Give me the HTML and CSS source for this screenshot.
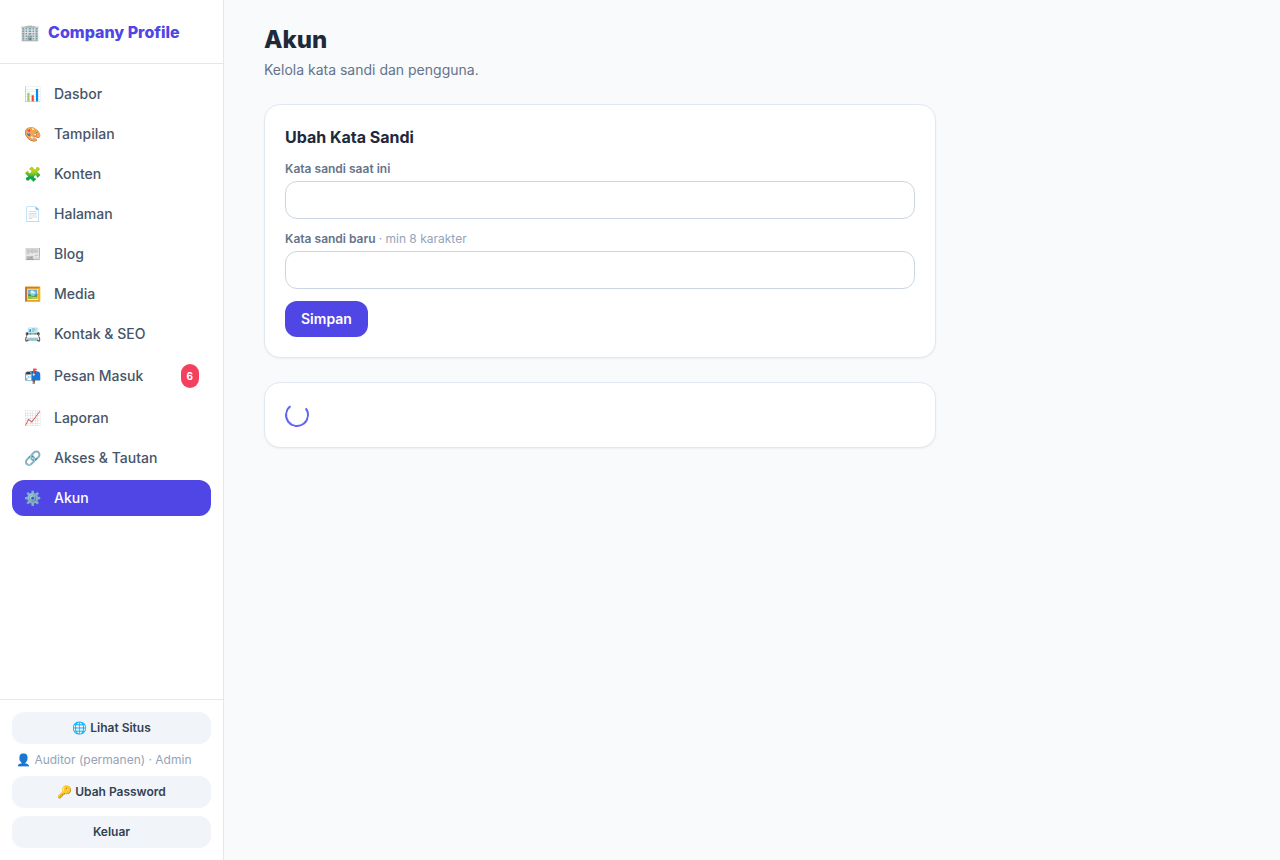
FILE: index.html
```html
<!DOCTYPE html>
<html lang="id">
<head>
    <meta charset="UTF-8">
    <meta name="viewport" content="width=device-width, initial-scale=1.0">
    <title>Akun</title>
    <link rel="stylesheet" href="styles.css">
</head>
<body>
    <div class="app">
        <aside class="sidebar">
            <div class="brand"><span>🏢</span><span>Company Profile</span></div>
            <nav class="menu">
                <a href="#dasbor" class="menu-item"><span class="icon">📊</span>Dasbor</a>
                <a href="#tampilan" class="menu-item"><span class="icon">🎨</span>Tampilan</a>
                <a href="#konten" class="menu-item"><span class="icon">🧩</span>Konten</a>
                <a href="#halaman" class="menu-item"><span class="icon">📄</span>Halaman</a>
                <a href="#blog" class="menu-item"><span class="icon">📰</span>Blog</a>
                <a href="#media" class="menu-item"><span class="icon">🖼️</span>Media</a>
                <a href="#kontak" class="menu-item"><span class="icon">📇</span>Kontak &amp; SEO</a>
                <a href="#pesan" class="menu-item"><span class="icon">📬</span>Pesan Masuk<span class="badge">6</span></a>
                <a href="#laporan" class="menu-item"><span class="icon">📈</span>Laporan</a>
                <a href="#akses" class="menu-item"><span class="icon">🔗</span>Akses &amp; Tautan</a>
                <a href="#akun" class="menu-item active"><span class="icon">⚙️</span>Akun</a>
            </nav>
            <div class="sidebar-footer">
                <a href="#situs" class="btn-soft">🌐 Lihat Situs</a>
                <div class="user">👤 Auditor (permanen) · Admin</div>
                <button type="button" class="btn-soft">🔑 Ubah Password</button>
                <button type="button" class="btn-soft">Keluar</button>
            </div>
        </aside>

        <main class="content">
            <h1>Akun</h1>
            <p class="subtitle">Kelola kata sandi dan pengguna.</p>

            <form class="card">
                <h2>Ubah Kata Sandi</h2>
                <div class="field">
                    <label for="current">Kata sandi saat ini</label>
                    <input type="password" id="current">
                </div>
                <div class="field">
                    <label for="new">Kata sandi baru <span class="hint">· min 8 karakter</span></label>
                    <input type="password" id="new">
                </div>
                <button type="button" class="btn-primary">Simpan</button>
            </form>

            <!-- daftar pengguna, masih dimuat -->
            <section class="card">
                <div class="spinner"></div>
            </section>
        </main>
    </div>
</body>
</html>
```
FILE: styles.css
```css
*{
    box-sizing: border-box;
}
body{
    margin: 0;
    background-color: #f8fafc;
    color: #1e293b;
    font-family: Inter, "Liberation Sans", sans-serif;
    font-size: 14px;
    line-height: 20px;
}
h1,h2,p{
    margin: 0;
}
a{
    color: inherit;
    text-decoration: none;
}
button,input{
    font: inherit;
    color: inherit;
}
button{
    border: none;
    cursor: pointer;
}
.app{
    display: flex;
    min-height: 100vh;
}

/* sidebar */
.sidebar{
    display: flex;
    flex-direction: column;
    flex-shrink: 0;
    width: 224px;
    background-color: white;
    border-right: 1px solid #e2e8f0;
}
.brand{
    display: flex;
    align-items: center;
    gap: 8px;
    height: 64px;
    padding: 0 20px;
    border-bottom: 1px solid #e2e8f0;
    color: #4f46e5;
    font-size: 16px;
    font-weight: 800;
    line-height: 24px;
}
.menu{
    display: flex;
    flex-direction: column;
    flex: 1;
    gap: 4px;
    padding: 12px;
}
.menu-item{
    display: flex;
    align-items: center;
    gap: 12px;
    padding: 8px 12px;
    border-radius: 12px;
    color: #475569;
    font-weight: 500;
}
.menu-item.active{
    background-color: #4f46e5;
    color: white;
}
.icon{
    min-width: 18px;
}
.badge{
    margin-left: auto;
    padding: 2px 6px;
    border-radius: 12px;
    background-color: #f43f5e;
    color: white;
    font-size: 10px;
    font-weight: 700;
}
.sidebar-footer{
    display: flex;
    flex-direction: column;
    gap: 8px;
    padding: 12px;
    border-top: 1px solid #e2e8f0;
    font-size: 12px;
    line-height: 16px;
}
.btn-soft{
    padding: 8px 12px;
    border-radius: 12px;
    background-color: #f1f5f9;
    color: #334155;
    font-weight: 600;
    text-align: center;
}
.user{
    padding: 0 4px;
    color: #94a3b8;
}

/* content */
.content{
    display: flex;
    flex-direction: column;
    flex: 1;
    max-width: 752px;
    padding: 24px 40px;
}
h1{
    font-size: 24px;
    font-weight: 800;
    line-height: 32px;
}
.subtitle{
    margin: 4px 0 24px;
    color: #64748b;
}
.card{
    margin-bottom: 24px;
    padding: 20px;
    border: 1px solid #e2e8f0;
    border-radius: 16px;
    background-color: white;
    box-shadow: 0 1px 2px rgba(0, 0, 0, 0.05);
}
h2{
    margin-bottom: 12px;
    font-size: 16px;
    font-weight: 700;
    line-height: 24px;
}
.field{
    margin-bottom: 12px;
}
.field label{
    display: block;
    margin-bottom: 4px;
    color: #64748b;
    font-size: 12px;
    font-weight: 600;
    line-height: 16px;
}
.hint{
    color: #94a3b8;
    font-weight: 400;
}
.field input{
    display: block;
    width: 100%;
    padding: 8px 12px;
    border: 1px solid #cbd5e1;
    border-radius: 12px;
    background-color: white;
}
.btn-primary{
    padding: 8px 16px;
    border-radius: 12px;
    background-color: #4f46e5;
    color: white;
    font-weight: 600;
}
.spinner{
    width: 24px;
    height: 24px;
    border: 2px solid #6366f1;
    border-top-color: transparent;
    border-radius: 50%;
    transform: rotate(8deg);
}
```
